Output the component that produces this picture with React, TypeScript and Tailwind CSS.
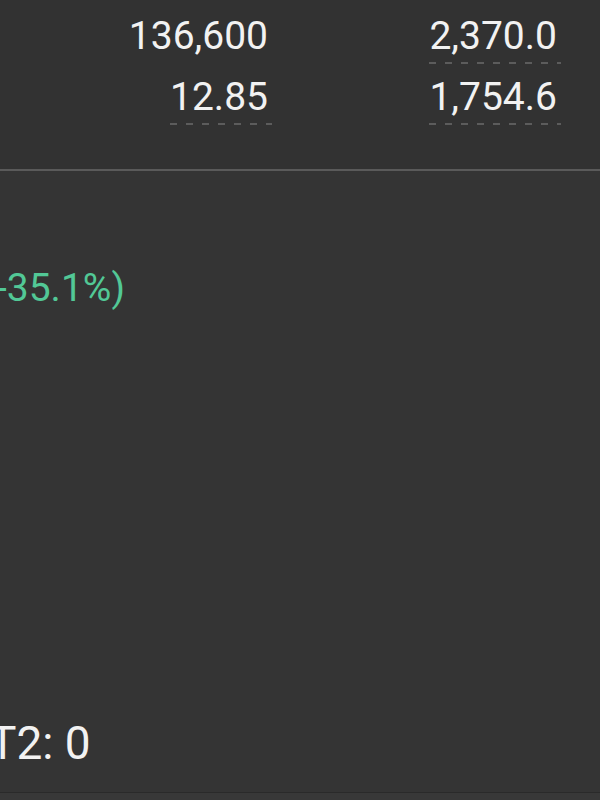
import React from "react";

const Dashes = () => (
  <div className="mt-[6px] h-[2px] w-[calc(100%+4px)] -mr-[4px] bg-[repeating-linear-gradient(90deg,#5c5c5c_0_7px,transparent_7px_16px)]" />
);

function Cell({ value, dashed, width }: { value: string; dashed?: boolean; width: string }) {
  return (
    <div className={`${width} flex justify-end`}>
      <div className="inline-flex flex-col items-end">
        <div className="text-[39px] leading-none h-[39px]">{value}</div>
        {dashed ? <Dashes /> : <div className="mt-[6px] h-[2px]" />}
      </div>
    </div>
  );
}

export default function App() {
  return (
    <div
      className="w-[600px] h-[800px] overflow-hidden bg-[#343434] text-[#f2f2f2] flex flex-col"
      style={{ fontFamily: "Roboto, 'Noto Sans', sans-serif" }}
    >
      <div className="h-[169px] pt-[17px] flex flex-col bg-[#323232]">
        <div className="h-[61px] flex">
          <Cell value="136,600" width="w-[268px]" />
          <Cell value="2,370.0" dashed width="w-[289px]" />
        </div>
        <div className="h-[61px] flex">
          <Cell value="12.85" dashed width="w-[268px]" />
          <Cell value="1,754.6" dashed width="w-[289px]" />
        </div>
      </div>
      <div className="h-[2px] bg-[#5a5a5a]" />
      <div className="mt-[98px] h-[39px] text-[39px] leading-none text-[#52c896] -ml-[4px] whitespace-nowrap">
        -35.1%)
      </div>
      <div className="mt-[412px] h-[46px] text-[46px] leading-none -ml-[11px] whitespace-nowrap">
        T2: 0
      </div>
      <div className="mt-[26px] h-[1px] bg-[#2a2a2a]" />
      <div className="flex-1 bg-[#383838]" />
    </div>
  );
}
